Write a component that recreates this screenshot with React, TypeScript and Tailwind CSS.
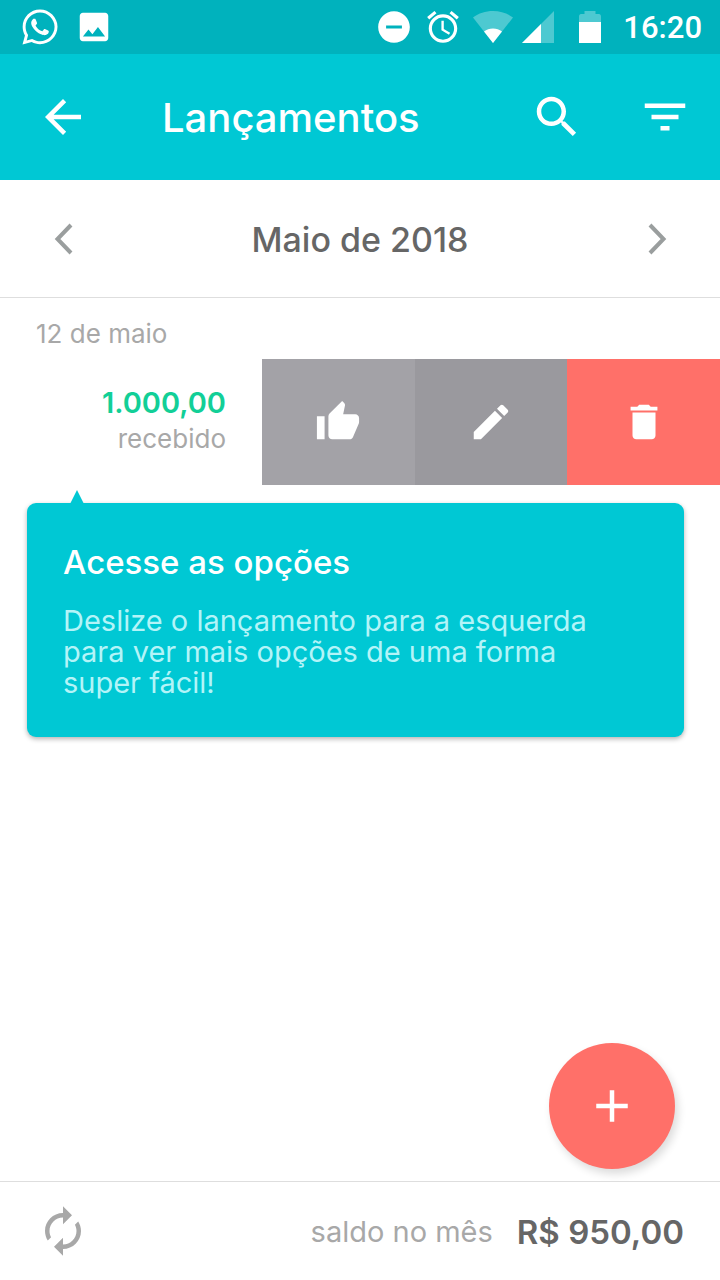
import type { ReactNode } from "react";
import { FaWhatsapp } from "react-icons/fa";

function Icon({ d, className }: { d: string; className: string }) {
  return (
    <svg viewBox="0 0 24 24" fill="currentColor" aria-hidden="true" className={className}>
      <path d={d} />
    </svg>
  );
}

const paths = {
  image:
    "M21 19V5c0-1.1-.9-2-2-2H5c-1.1 0-2 .9-2 2v14c0 1.1.9 2 2 2h14c1.1 0 2-.9 2-2zM8.500 13.500l2.500 3.010L14.500 12l4.500 6H5l3.500-4.500z",
  doNotDisturb:
    "M12 2C6.480 2 2 6.480 2 12s4.480 10 10 10 10-4.480 10-10S17.520 2 12 2zm5 11H7v-2h10v2z",
  alarm:
    "M22 5.720l-4.600-3.860-1.290 1.530 4.600 3.860L22 5.720zM7.880 3.390L6.600 1.860 2 5.710l1.290 1.530 4.590-3.850zM12.500 8H11v6l4.750 2.850.75-1.230-4-2.370V8zM12 4c-4.970 0-9 4.030-9 9s4.020 9 9 9c4.970 0 9-4.030 9-9s-4.030-9-9-9zm0 16c-3.870 0-7-3.130-7-7s3.130-7 7-7 7 3.130 7 7-3.130 7-7 7z",
  back: "M20 11H7.830l5.590-5.590L12 4l-8 8 8 8 1.410-1.410L7.830 13H20v-2z",
  search:
    "M15.500 14h-.79l-.28-.27C15.410 12.590 16 11.110 16 9.500 16 5.910 13.090 3 9.500 3S3 5.910 3 9.500 5.910 16 9.500 16c1.610 0 3.090-.59 4.230-1.570l.27.28v.79l5 4.990L20.490 19l-4.990-5zm-6 0C7.010 14 5 11.990 5 9.500S7.010 5 9.500 5 14 7.010 14 9.500 11.990 14 9.500 14z",
  filter: "M10 18h4v-2h-4v2zM3 6v2h18V6H3zm3 7h12v-2H6v2z",
  thumb:
    "M1 21h4V9H1v12zm22-11c0-1.100-.9-2-2-2h-6.310l.95-4.570.03-.32c0-.41-.17-.79-.44-1.060L14.170 1 7.590 7.590C7.220 7.950 7 8.450 7 9v10c0 1.100.9 2 2 2h9c.83 0 1.540-.5 1.840-1.220l3.020-7.050c.09-.23.14-.47.14-.73v-2z",
  edit: "M3 17.250V21h3.750L17.810 9.940l-3.750-3.750L3 17.250zM20.710 7.040c.39-.39.39-1.020 0-1.410l-2.340-2.340c-.39-.39-1.020-.39-1.410 0l-1.830 1.830 3.750 3.750 1.830-1.830z",
  trash: "M6 19c0 1.100.9 2 2 2h8c1.100 0 2-.9 2-2V7H6v12zM19 4h-3.500l-1-1h-5l-1 1H5v2h14V4z",
  add: "M19 13h-6v6h-2v-6H5v-2h6V5h2v6h6v2z",
  renew:
    "M12 6v3l4-4-4-4v3c-4.420 0-8 3.580-8 8 0 1.570.46 3.030 1.240 4.260L6.700 14.800c-.45-.83-.7-1.790-.7-2.800 0-3.310 2.690-6 6-6zm6.760 1.740L17.300 9.200c.44.840.7 1.790.7 2.800 0 3.310-2.690 6-6 6v-3l-4 4 4 4v-3c4.420 0 8-3.580 8-8 0-1.570-.46-3.030-1.240-4.260z",
};

function StatusBar() {
  return (
    <div className="flex h-[54px] items-center justify-between bg-[#00b2bd] pr-[18px] pl-[20px]">
      <div className="flex items-center gap-[15px]">
        <FaWhatsapp className="size-[40px]" aria-hidden="true" />
        <Icon d={paths.image} className="size-[38px]" />
      </div>
      <div className="flex items-center">
        <Icon d={paths.doNotDisturb} className="size-[38px]" />
        <Icon d={paths.alarm} className="ml-[11px] size-[38px]" />
        <svg viewBox="0 0 40 32" className="ml-[11px] h-[32px] w-[40px]" fill="currentColor" aria-hidden="true">
          <path d="M20 32 0 6.500C5.500 2.300 12.500 0 20 0s14.500 2.300 20 6.500z" opacity=".3" />
          <path d="M20 32 11 20.500c2.500-2 5.600-3 9-3s6.500 1 9 3z" />
        </svg>
        <svg viewBox="0 0 32 32" className="ml-[9px] h-[32px] w-[32px]" fill="currentColor" aria-hidden="true">
          <path d="M32 0V32H0z" opacity=".3" />
          <path d="M19 13V32H0z" />
        </svg>
        <svg viewBox="0 0 22 32" className="ml-[25px] h-[32px] w-[22px]" fill="currentColor" aria-hidden="true">
          <path d="M0 11V5.500C0 4 .8 3 2 3h3.500V0h11v3H20c1.200 0 2 1 2 2.500V11z" opacity=".3" />
          <path d="M0 11h22v21H0z" />
        </svg>
        <span className="ml-[22px] pt-[2px] font-[Roboto] text-[31px] leading-[54px] font-medium">16:20</span>
      </div>
    </div>
  );
}

function IconButton({ label, children }: { label: string; children: ReactNode }) {
  return (
    <button type="button" aria-label={label} className="flex size-[54px] shrink-0 items-center justify-center">
      {children}
    </button>
  );
}

function ActionButton({ label, d, tone }: { label: string; d: string; tone: string }) {
  return (
    <button type="button" aria-label={label} className={`flex flex-1 items-center justify-center text-white ${tone}`}>
      <Icon d={d} className="size-[46px]" />
    </button>
  );
}

export default function App() {
  return (
    <div className="flex min-h-screen flex-col bg-white font-['Inter',sans-serif] text-[#666]">
      <header className="text-white">
        <StatusBar />
        <div className="flex h-[126px] items-center bg-[#00c8d4] pr-[28px] pl-[36px]">
          <IconButton label="Voltar">
            <Icon d={paths.back} className="size-[54px]" />
          </IconButton>
          <h1 className="ml-[72px] flex-1 pt-[2px] text-[40px] leading-[54px] font-medium">Lançamentos</h1>
          <div className="flex gap-[54px]">
            <IconButton label="Buscar">
              <Icon d={paths.search} className="size-[54px]" />
            </IconButton>
            <IconButton label="Filtrar">
              <Icon d={paths.filter} className="size-[54px]" />
            </IconButton>
          </div>
        </div>
      </header>

      <nav aria-label="Mês" className="flex h-[118px] items-center justify-between border-b border-[#dedede] px-[36px]">
        <IconButton label="Mês anterior">
          <svg viewBox="0 0 54 54" className="size-[54px] text-[#9a9e9e]" fill="none" stroke="currentColor" strokeWidth="4" aria-hidden="true">
            <path d="M35 13 21.500 27 35 41" />
          </svg>
        </IconButton>
        <h2 className="pt-[2px] text-[34px] leading-[54px] font-medium">Maio de 2018</h2>
        <IconButton label="Próximo mês">
          <svg viewBox="0 0 54 54" className="size-[54px] text-[#9a9e9e]" fill="none" stroke="currentColor" strokeWidth="4" aria-hidden="true">
            <path d="M20 13 33.500 27 20 41" />
          </svg>
        </IconButton>
      </nav>

      <main className="flex flex-1 flex-col">
        <h3 className="px-[36px] pt-[18px] pb-[7px] text-[26px] leading-[36px] text-[#a8a8a8]">12 de maio</h3>

        <div className="flex h-[126px]">
          <div className="flex flex-1 flex-col justify-center pr-[36px] pb-[2px] text-right">
            <span className="text-[29px] leading-[36px] font-semibold text-[#12cf97]">1.000,00</span>
            <span className="text-[26px] leading-[36px] text-[#a8a8a8]">recebido</span>
          </div>
          <div className="flex w-[458px]">
            <ActionButton label="Marcar como recebido" d={paths.thumb} tone="bg-[#a3a2a7]" />
            <ActionButton label="Editar" d={paths.edit} tone="bg-[#9a999e]" />
            <ActionButton label="Excluir" d={paths.trash} tone="bg-[#ff7069]" />
          </div>
        </div>

        <section className="relative mt-[18px] mr-[36px] ml-[27px] rounded-[9px] bg-[#00c8d4] px-[36px] pt-[36px] pb-[39px] shadow-[0_2px_5px_rgba(0,0,0,0.3)]">
          <svg viewBox="0 0 14 14" className="absolute -top-[13px] left-[43px] size-[14px] text-[#00c8d4]" fill="currentColor" aria-hidden="true">
            <path d="M7 0 14 14H0z" />
          </svg>
          <h4 className="text-[33px] leading-[46px] font-medium text-white">Acesse as opções</h4>
          <p className="mt-[20px] pr-[36px] text-[29px] leading-[31px] text-[#b3f4f8]">
            Deslize o lançamento para a esquerda para ver mais opções de uma forma super fácil!
          </p>
        </section>

        <button
          type="button"
          aria-label="Adicionar lançamento"
          className="mt-auto mr-[45px] mb-[12px] flex size-[126px] items-center justify-center self-end rounded-full bg-[#ff7069] text-white shadow-[3px_5px_8px_rgba(0,0,0,0.14)]"
        >
          <Icon d={paths.add} className="size-[54px]" />
        </button>
      </main>

      <footer className="flex h-[99px] items-center border-t border-[#dedede] pr-[36px] pl-[36px]">
        <button type="button" aria-label="Sincronizar" className="flex size-[54px] items-center justify-center text-[#a8a8a8]">
          <Icon d={paths.renew} className="size-[54px]" />
        </button>
        <p className="ml-auto flex items-center gap-[24px] pt-[2px] leading-[46px]">
          <span className="text-[29px] text-[#a8a8a8]">saldo no mês</span>
          <strong className="text-[33px] font-semibold">R$ 950,00</strong>
        </p>
      </footer>
    </div>
  );
}
